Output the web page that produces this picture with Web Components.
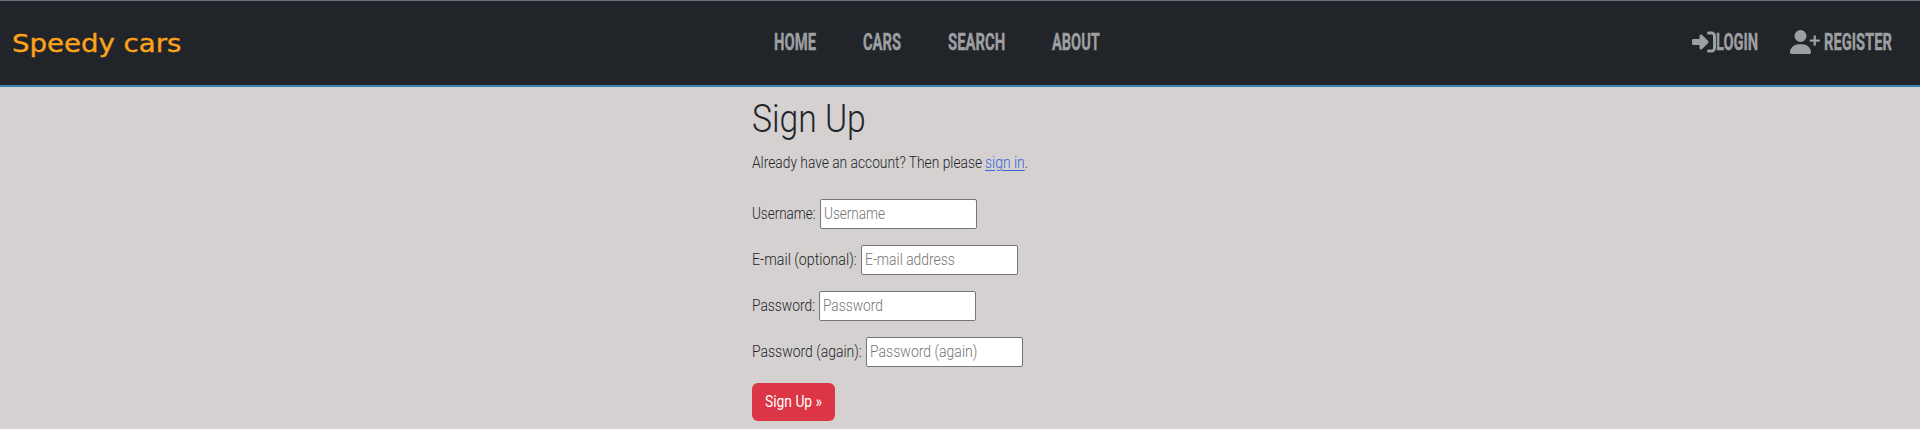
<!DOCTYPE html>
<html lang="en">
<head>
<meta charset="utf-8">
<title>Speedy cars</title>
<style>
body{margin:0;background:#d5d1d0;font-family:Roboto,"Liberation Sans",sans-serif;color:#212529;height:429px;overflow:hidden}
</style>
</head>
<body>
<speedy-page></speedy-page>
<script>
const define = (name, html, init) => {
  const tpl = document.createElement('template');
  tpl.innerHTML = html;
  customElements.define(name, class extends HTMLElement {
    connectedCallback() {
      if (this.shadowRoot) return;
      this.attachShadow({mode: 'open'}).append(tpl.content.cloneNode(true));
      if (init) init(this, this.shadowRoot);
    }
  });
};

// Text set to a given measure: the glyphs are condensed or expanded to fill it.
define('fit-text', `
<style>
:host{display:inline-block;white-space:nowrap;flex:none}
span{display:inline-block;transform-origin:0 50%}
</style><span><slot></slot></span>`, (el, root) => {
  const w = +el.getAttribute('w'), s = root.querySelector('span');
  el.style.width = w + 'px';
  s.style.transform = 'scaleX(' + w / s.offsetWidth + ')';
});

define('nav-link', `
<style>
:host{display:flex;align-items:center;color:#9e9fa1;font:700 24px/28px Roboto,"Liberation Sans",sans-serif;-webkit-text-stroke:.4px #9e9fa1}
a{color:inherit;text-decoration:none;display:flex}
</style><slot name="icon"></slot><a href="#"><fit-text><slot></slot></fit-text></a>`, (el, root) => {
  const f = root.querySelector('fit-text');
  const t = document.createElement('fit-text');
  t.setAttribute('w', el.getAttribute('w'));
  t.textContent = el.textContent.trim();
  f.replaceWith(t);
});

define('site-header', `
<style>
:host{display:grid;grid-template-columns:774px 1fr 228px;height:87px;box-sizing:border-box;background:#212529;border-top:1px solid #6c757d;border-bottom:2px solid #337fb3}
.brand{padding:26px 0 0 12px;color:#fda31b;font:24px/34px "DejaVu Sans",sans-serif;-webkit-text-stroke:.35px #fda31b}
nav,.user{display:flex;align-items:flex-start;padding-top:27px}
nav{gap:47px}
svg{display:block;fill:#9e9fa1;flex:none}
.reg{margin-left:32px}
</style>
<div class="brand"><fit-text w="169">Speedy cars</fit-text></div>
<nav>
<nav-link w="42">HOME</nav-link>
<nav-link w="38">CARS</nav-link>
<nav-link w="57">SEARCH</nav-link>
<nav-link w="48">ABOUT</nav-link>
</nav>
<div class="user">
<nav-link w="42"><svg slot="icon" width="24" height="24" viewBox="0 0 512 512"><path d="M217.900 105.900L340.700 228.700c7.200 7.200 11.300 17.100 11.300 27.300s-4.100 20.100-11.300 27.300L217.900 406.100c-6.400 6.400-15 9.900-24 9.900c-18.700 0-33.900-15.200-33.900-33.900V320H32c-17.700 0-32-14.300-32-32V224c0-17.700 14.300-32 32-32H160V129.900c0-18.700 15.200-33.900 33.900-33.900c9 0 17.600 3.600 24 9.900zM352 416h64c17.700 0 32-14.300 32-32V128c0-17.700-14.300-32-32-32H352c-17.700 0-32-14.300-32-32s14.300-32 32-32h64c53 0 96 43 96 96V384c0 53-43 96-96 96H352c-17.700 0-32-14.300-32-32s14.300-32 32-32z"/></svg>LOGIN</nav-link>
<nav-link class="reg" w="68"><svg slot="icon" width="30" height="24" style="margin-right:4px" viewBox="0 0 640 512"><path d="M96 128a128 128 0 1 1 256 0A128 128 0 1 1 96 128zM0 482.300C0 383.800 79.800 304 178.300 304h91.400C368.200 304 448 383.800 448 482.300c0 16.400-13.300 29.700-29.700 29.700H29.700C13.300 512 0 498.700 0 482.300zM504 312V248H440c-13.300 0-24-10.700-24-24s10.700-24 24-24h64V136c0-13.300 10.700-24 24-24s24 10.700 24 24v64h64c13.300 0 24 10.700 24 24s-10.700 24-24 24H552v64c0 13.300-10.700 24-24 24s-24-10.700-24-24z"/></svg>REGISTER</nav-link>
</div>`);

define('form-field', `
<style>
:host{display:flex;align-items:center;height:30px;margin-bottom:16px;font:300 16px/24px Roboto,"Liberation Sans",sans-serif}
.box{display:grid;align-items:center;width:157px;height:30px;margin-left:4px}
input,.hint{grid-area:1/1}
input{width:157px;height:30px;box-sizing:border-box;margin:0;border:1px solid #767676;border-radius:2px;background:#fff;font:inherit}
.hint{z-index:1;padding-left:4px;color:#757575;pointer-events:none}
</style>
<span class="label"></span><span class="box"><input><span class="hint"></span></span>`, (el, root) => {
  const put = (sel, text, w) => {
    const t = document.createElement('fit-text');
    t.setAttribute('w', w);
    t.textContent = text;
    root.querySelector(sel).append(t);
  };
  put('.label', el.getAttribute('label'), el.getAttribute('label-w'));
  put('.hint', el.getAttribute('hint'), el.getAttribute('hint-w'));
  root.querySelector('input').type = el.getAttribute('type') || 'text';
});

define('signup-form', `
<style>
:host{display:block;width:416px;margin-left:752px;font:300 16px/24px Roboto,"Liberation Sans",sans-serif}
h1{margin:0;padding-top:8px;font:300 39px/48px Roboto,"Liberation Sans",sans-serif}
p{margin:8px 0 24px;display:flex}
a{color:#3565dd;display:flex}
u{text-underline-offset:2px}
button{display:block;width:83px;height:38px;border:0;border-radius:6px;background:#dc3545;color:#fff;padding:0 0 0 13px;text-align:left;font:400 16px/24px Roboto,"Liberation Sans",sans-serif}
</style>
<h1><fit-text w="114">Sign Up</fit-text></h1>
<p><fit-text w="230">Already have an account? Then please</fit-text><a href="#" style="margin-left:3px;text-decoration:none"><fit-text w="40"><u>sign in</u></fit-text></a><fit-text w="3">.</fit-text></p>
<form-field label="Username:" label-w="64" hint="Username" hint-w="61"></form-field>
<form-field label="E-mail (optional):" label-w="105" hint="E-mail address" hint-w="90"></form-field>
<form-field type="password" label="Password:" label-w="63" hint="Password" hint-w="60"></form-field>
<form-field type="password" label="Password (again):" label-w="110" hint="Password (again)" hint-w="107"></form-field>
<button><fit-text w="57">Sign Up »</fit-text></button>`);

define('speedy-page', `
<style>:host{display:block}</style>
<site-header></site-header>
<signup-form></signup-form>`);
</script>
</body>
</html>
